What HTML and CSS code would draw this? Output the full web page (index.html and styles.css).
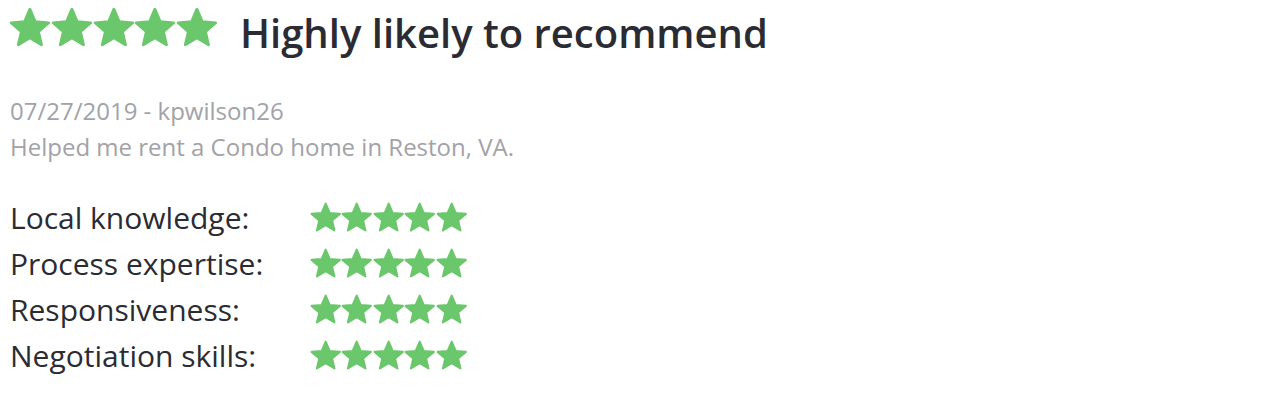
FILE: index.html
```html
<!DOCTYPE html>
<html>
<head>
<meta charset="utf-8">
<link rel="stylesheet" href="styles.css">
</head>
<body>
<svg class="defs" width="0" height="0" aria-hidden="true">
  <defs>
    <path id="star" d="M12 1.24L15.03 8.4 22.8 9.06 16.9 14.17 18.67 21.76 12 17.73 5.33 21.76 7.1 14.17 1.2 9.06 8.97 8.4z"/>
  </defs>
</svg>
<div class="review">
  <div class="headline">
    <div class="stars stars-lg">
      <svg viewBox="0 0 24 24"><use class="star" href="#star"/></svg>
      <svg viewBox="0 0 24 24"><use class="star" href="#star"/></svg>
      <svg viewBox="0 0 24 24"><use class="star" href="#star"/></svg>
      <svg viewBox="0 0 24 24"><use class="star" href="#star"/></svg>
      <svg viewBox="0 0 24 24"><use class="star" href="#star"/></svg>
    </div>
    <h1 class="title">Highly likely to recommend</h1>
  </div>
  <div class="meta">
    <div>07/27/2019 - kpwilson26</div>
    <div>Helped me rent a Condo home in Reston, VA.</div>
  </div>
  <div class="ratings">
    <div class="label">Local knowledge:</div>
    <div class="stars stars-sm">
      <svg viewBox="0 0 24 24"><use class="star" href="#star"/></svg>
      <svg viewBox="0 0 24 24"><use class="star" href="#star"/></svg>
      <svg viewBox="0 0 24 24"><use class="star" href="#star"/></svg>
      <svg viewBox="0 0 24 24"><use class="star" href="#star"/></svg>
      <svg viewBox="0 0 24 24"><use class="star" href="#star"/></svg>
    </div>
    <div class="label">Process expertise:</div>
    <div class="stars stars-sm">
      <svg viewBox="0 0 24 24"><use class="star" href="#star"/></svg>
      <svg viewBox="0 0 24 24"><use class="star" href="#star"/></svg>
      <svg viewBox="0 0 24 24"><use class="star" href="#star"/></svg>
      <svg viewBox="0 0 24 24"><use class="star" href="#star"/></svg>
      <svg viewBox="0 0 24 24"><use class="star" href="#star"/></svg>
    </div>
    <div class="label">Responsiveness:</div>
    <div class="stars stars-sm">
      <svg viewBox="0 0 24 24"><use class="star" href="#star"/></svg>
      <svg viewBox="0 0 24 24"><use class="star" href="#star"/></svg>
      <svg viewBox="0 0 24 24"><use class="star" href="#star"/></svg>
      <svg viewBox="0 0 24 24"><use class="star" href="#star"/></svg>
      <svg viewBox="0 0 24 24"><use class="star" href="#star"/></svg>
    </div>
    <div class="label">Negotiation skills:</div>
    <div class="stars stars-sm">
      <svg viewBox="0 0 24 24"><use class="star" href="#star"/></svg>
      <svg viewBox="0 0 24 24"><use class="star" href="#star"/></svg>
      <svg viewBox="0 0 24 24"><use class="star" href="#star"/></svg>
      <svg viewBox="0 0 24 24"><use class="star" href="#star"/></svg>
      <svg viewBox="0 0 24 24"><use class="star" href="#star"/></svg>
    </div>
  </div>
</div>
</body>
</html>
```
FILE: styles.css
```css
html, body {
  margin: 0;
  padding: 0;
  background: #ffffff;
}
body {
  font-family: "Open Sans", "Liberation Sans", sans-serif;
  color: #2b2b33;
}
.defs {
  position: absolute;
  width: 0;
  height: 0;
  overflow: hidden;
}
.review {
  padding: 7px 10px 0 10px;
}
.headline {
  display: flex;
  align-items: flex-start;
  gap: 22px;
}
.stars {
  display: flex;
}
.stars svg {
  display: block;
}
.star {
  fill: #6ac76b;
  stroke: #6ac76b;
  stroke-width: 1.6;
  stroke-linejoin: round;
}
.stars-lg {
  margin-left: -1px;
}
.stars-lg svg {
  width: 41.8px;
  height: 41.8px;
}
.stars-sm svg {
  width: 31.4px;
  height: 31.4px;
}
.title {
  margin: 6px 0 0 0;
  font-size: 40px;
  font-weight: 600;
  line-height: 40px;
}
.meta {
  margin-top: 40px;
  font-size: 24px;
  line-height: 36px;
  color: #a2a2a8;
}
.ratings {
  margin-top: 30px;
  display: grid;
  grid-template-columns: 300px auto;
  grid-auto-rows: 46px;
  align-items: center;
  justify-content: start;
}
.label {
  font-size: 30px;
  line-height: 46px;
}
```
